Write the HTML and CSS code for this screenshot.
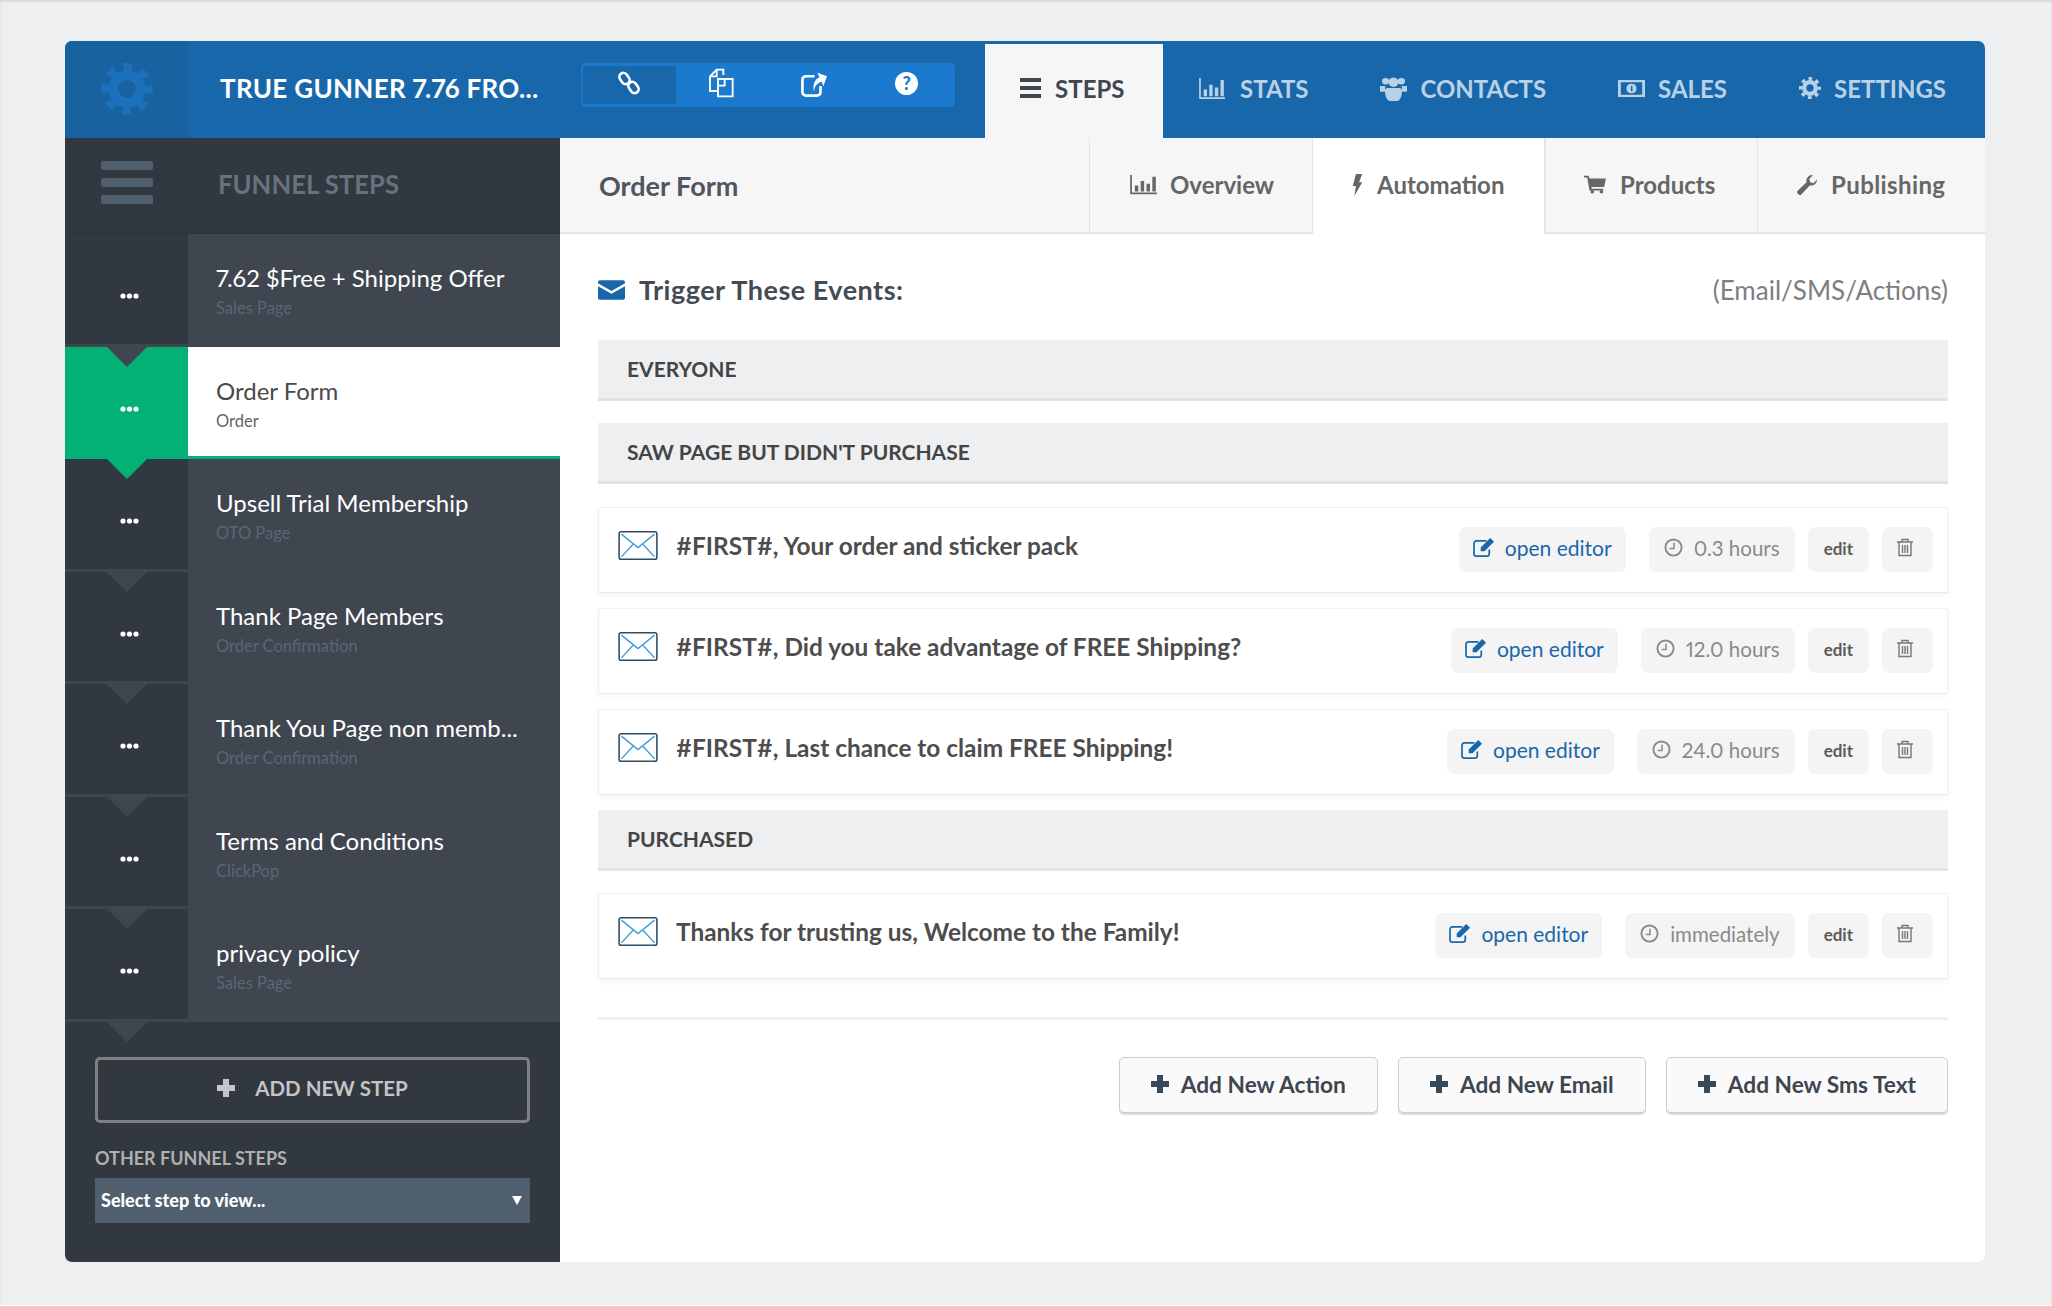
FILE: index.html
```html
<!DOCTYPE html>
<html lang="en">
<head>
  <meta charset="UTF-8" />
  <title>Funnel Steps</title>
  <link rel="stylesheet" href="styles.css">
</head>
<body>
  <svg class="sprite" xmlns="http://www.w3.org/2000/svg">
    <symbol id="i-gear" viewBox="0 0 24 24"><circle cx="12" cy="12" r="6.3" fill="none" stroke="currentColor" stroke-width="4.6"/><circle cx="12" cy="12" r="10" fill="none" stroke="currentColor" stroke-width="4" stroke-dasharray="3.93 3.93" stroke-dashoffset="1.96"/></symbol>
    <symbol id="i-link" viewBox="0 0 24 24"><g fill="none" stroke="currentColor" stroke-width="2.600"><rect x="3.500" y="1.500" width="8" height="12" rx="4" transform="rotate(-35 7.500 7.500)"/><rect x="12.500" y="10.500" width="8" height="12" rx="4" transform="rotate(-35 16.500 16.500)"/></g></symbol>
    <symbol id="i-copy" viewBox="0 0 24 24"><path d="M13 6V2H8L3 7v11h6M8 2v5H3" fill="none" stroke="currentColor" stroke-width="1.400"/><path d="M9 9h11v13H9zM14 9v5H9" fill="none" stroke="currentColor" stroke-width="1.400"/></symbol>
    <symbol id="i-ext" viewBox="0 0 24 24"><path d="M17 14v5a3 3 0 0 1-3 3H5a3 3 0 0 1-3-3V9a3 3 0 0 1 3-3h7" fill="none" stroke="currentColor" stroke-width="2.200"/><path d="M8 16c1-6 5-9 9-9V3l6 6-6 6v-4c-4 0-7 1-9 5z" fill="currentColor" transform="rotate(-25 16 9)"/></symbol>
    <symbol id="i-chart" viewBox="0 0 24 24" preserveAspectRatio="none"><path d="M1 1h1.500v20H24v2H1z" fill="currentColor"/><path d="M5 13h3v7H5zM10 8h3v12h-3zM15 11h3v9h-3zM20 3h3v17h-3z" fill="currentColor"/></symbol>
    <symbol id="i-users" viewBox="0 0 24 24" preserveAspectRatio="none"><circle cx="5" cy="5" r="3.200" fill="currentColor"/><circle cx="19" cy="5" r="3.200" fill="currentColor"/><path d="M0 9.500h5c-1 1.500-1 3.500 1 5.500H0zM24 9.500h-5c1 1.500 1 3.500-1 5.500h6z" fill="currentColor"/><circle cx="12" cy="6" r="4.500" fill="currentColor"/><path d="M6.500 11.500h11c1.500 0 2 1 2 3 0 5-2 9.500-4 9.500h-7c-2 0-4-4.500-4-9.500 0-2 .5-3 2-3z" fill="currentColor"/></symbol>
    <symbol id="i-money" viewBox="0 3 24 18" preserveAspectRatio="none"><path fill-rule="evenodd" d="M0 3h24v18H0zM2.500 5.500v13h19v-13zM12 7c3 0 4.500 2 4.500 5s-1.500 5-4.500 5-4.500-2-4.500-5 1.500-5 4.500-5z" fill="currentColor"/><path d="M11.500 9h1.300v6h-1.300z" fill="#1967ab"/></symbol>
    <symbol id="i-bolt" viewBox="0 0 14 24" preserveAspectRatio="none"><path d="M5 0h8L9 9h4L3 24l2-11H1z" fill="currentColor"/></symbol>
    <symbol id="i-cart" viewBox="0 2 24 22" preserveAspectRatio="none"><path d="M0 3h5l1 3h18l-2 10H8l.5 2H21v2H6L3.500 5H0z" fill="currentColor"/><circle cx="9" cy="21.500" r="2" fill="currentColor"/><circle cx="19" cy="21.500" r="2" fill="currentColor"/></symbol>
    <symbol id="i-wrench" viewBox="0 0 24 24"><path d="M23 6c0 4-3.500 7.500-8 6.500L5.500 22.500c-1.500 1.500-5.500-2-4-4l10-9.500C10.500 4.500 14 .5 18.500 1L14.500 5.500l1 3.500 3.500 1 4-4z" fill="currentColor"/></symbol>
    <symbol id="i-mail" viewBox="0 0 28 20"><path d="M2 0h24a2 2 0 0 1 2 2v1L14 11 0 3V2a2 2 0 0 1 2-2zM0 6l14 8 14-8v12a2 2 0 0 1-2 2H2a2 2 0 0 1-2-2z" fill="currentColor"/></symbol>
    <symbol id="i-envelope" viewBox="0 0 38 28"><rect x=".75" y=".75" width="36.500" height="26.500" rx="2" fill="#fff" stroke="#2f4a63" stroke-width="1.500"/><path d="M3 3l16 13L35 3M3 25l11-12M35 25L24 13" fill="none" stroke="#3d9ad6" stroke-width="1.300"/></symbol>
    <symbol id="i-edit" viewBox="0 0 24 22"><path d="M17 13v4.500a2.500 2.500 0 0 1-2.500 2.500h-11A2.500 2.500 0 0 1 1 17.500v-11A2.500 2.500 0 0 1 3.500 4H14" fill="none" stroke="currentColor" stroke-width="1.800"/><path d="M8 11L18 1l4 4-10 10H8z" fill="currentColor"/></symbol>
    <symbol id="i-clock" viewBox="0 0 20 20"><circle cx="10" cy="10" r="8.500" fill="none" stroke="currentColor" stroke-width="2"/><path d="M10.500 5v6H6" fill="none" stroke="currentColor" stroke-width="1.600"/></symbol>
    <symbol id="i-trash" viewBox="0 0 16 19"><path d="M0 4h16M5 4V1.500h6V4M2 4v13.500h12V4M5.500 7v8M8 7v8M10.500 7v8" fill="none" stroke="currentColor" stroke-width="1.400"/></symbol>
    <symbol id="i-plus" viewBox="0 0 18 18"><path d="M6 0h6v6h6v6h-6v6H6v-6H0V6h6z" fill="currentColor"/></symbol>
    <symbol id="i-dots" viewBox="0 0 19 6"><circle cx="3" cy="3" r="2.600" fill="currentColor"/><circle cx="9.500" cy="3" r="2.600" fill="currentColor"/><circle cx="16" cy="3" r="2.600" fill="currentColor"/></symbol>
  </svg>

  <div class="app">
    <header class="topbar">
      <div class="topbar-gear"><svg class="gear-big"><use href="#i-gear"/></svg></div>
      <div class="topbar-title">TRUE GUNNER 7.76 FRO...</div>
      <div class="quick-tools">
        <span class="tool active"><svg><use href="#i-link"/></svg></span>
        <span class="tool tool-copy"><svg><use href="#i-copy"/></svg></span>
        <span class="tool tool-ext"><svg><use href="#i-ext"/></svg></span>
        <span class="tool"><span class="help">?</span></span>
      </div>
      <nav class="mainnav">
        <a class="mainnav-item active"><span class="bars"><i></i><i></i><i></i></span>STEPS</a>
        <a class="mainnav-item"><svg><use href="#i-chart"/></svg>STATS</a>
        <a class="mainnav-item"><svg class="narrow"><use href="#i-users"/></svg>CONTACTS</a>
        <a class="mainnav-item"><svg class="money"><use href="#i-money"/></svg>SALES</a>
        <a class="mainnav-item last"><svg class="small-gear"><use href="#i-gear"/></svg>SETTINGS</a>
      </nav>
    </header>

    <div class="body">
      <aside class="sidebar">
        <div class="side-head">
          <div class="side-head-rail"><span class="burger"><i></i><i></i><i></i></span></div>
          <div class="side-head-title">FUNNEL STEPS</div>
        </div>

        <div class="step first">
          <div class="rail"><svg><use href="#i-dots"/></svg></div>
          <div class="step-text"><div class="step-name">7.62 $Free + Shipping Offer</div><div class="step-type">Sales Page</div></div>
        </div>
        <div class="step active">
          <div class="rail"><svg><use href="#i-dots"/></svg></div>
          <div class="step-text"><div class="step-name">Order Form</div><div class="step-type">Order</div></div>
        </div>
        <div class="step after-active">
          <div class="rail"><svg><use href="#i-dots"/></svg></div>
          <div class="step-text"><div class="step-name">Upsell Trial Membership</div><div class="step-type">OTO Page</div></div>
        </div>
        <div class="step">
          <div class="rail"><svg><use href="#i-dots"/></svg></div>
          <div class="step-text"><div class="step-name">Thank Page Members</div><div class="step-type">Order Confirmation</div></div>
        </div>
        <div class="step">
          <div class="rail"><svg><use href="#i-dots"/></svg></div>
          <div class="step-text"><div class="step-name">Thank You Page non memb...</div><div class="step-type">Order Confirmation</div></div>
        </div>
        <div class="step">
          <div class="rail"><svg><use href="#i-dots"/></svg></div>
          <div class="step-text"><div class="step-name">Terms and Conditions</div><div class="step-type">ClickPop</div></div>
        </div>
        <div class="step">
          <div class="rail"><svg><use href="#i-dots"/></svg></div>
          <div class="step-text"><div class="step-name">privacy policy</div><div class="step-type">Sales Page</div></div>
        </div>

        <div class="side-foot">
          <a class="add-step"><svg><use href="#i-plus"/></svg>ADD NEW STEP</a>
          <div class="other-label">OTHER FUNNEL STEPS</div>
          <div class="step-select">Select step to view...<span class="caret"></span></div>
        </div>
      </aside>

      <main class="main">
        <div class="subnav">
          <div class="subnav-title">Order Form</div>
          <a class="subtab tab-overview"><svg><use href="#i-chart"/></svg>Overview</a>
          <a class="subtab tab-automation active"><svg><use href="#i-bolt"/></svg>Automation</a>
          <a class="subtab tab-products"><svg><use href="#i-cart"/></svg>Products</a>
          <a class="subtab tab-publishing"><svg><use href="#i-wrench"/></svg>Publishing</a>
        </div>

        <div class="content">
          <div class="events-head">
            <svg class="mail"><use href="#i-mail"/></svg>
            <span class="events-title">Trigger These Events:</span>
            <span class="events-note">(Email/SMS/Actions)</span>
          </div>

          <div class="group first-group">EVERYONE</div>
          <div class="group">SAW PAGE BUT DIDN'T PURCHASE</div>

          <div class="email-row">
            <svg class="envelope"><use href="#i-envelope"/></svg>
            <div class="email-title">#FIRST#, Your order and sticker pack</div>
            <a class="pill pill-open"><svg><use href="#i-edit"/></svg>open editor</a>
            <a class="pill pill-time"><svg><use href="#i-clock"/></svg>0.3 hours</a>
            <a class="pill pill-edit">edit</a>
            <a class="pill pill-trash"><svg><use href="#i-trash"/></svg></a>
          </div>
          <div class="email-row">
            <svg class="envelope"><use href="#i-envelope"/></svg>
            <div class="email-title">#FIRST#, Did you take advantage of FREE Shipping?</div>
            <a class="pill pill-open"><svg><use href="#i-edit"/></svg>open editor</a>
            <a class="pill pill-time"><svg><use href="#i-clock"/></svg>12.0 hours</a>
            <a class="pill pill-edit">edit</a>
            <a class="pill pill-trash"><svg><use href="#i-trash"/></svg></a>
          </div>
          <div class="email-row">
            <svg class="envelope"><use href="#i-envelope"/></svg>
            <div class="email-title">#FIRST#, Last chance to claim FREE Shipping!</div>
            <a class="pill pill-open"><svg><use href="#i-edit"/></svg>open editor</a>
            <a class="pill pill-time"><svg><use href="#i-clock"/></svg>24.0 hours</a>
            <a class="pill pill-edit">edit</a>
            <a class="pill pill-trash"><svg><use href="#i-trash"/></svg></a>
          </div>

          <div class="group">PURCHASED</div>

          <div class="email-row">
            <svg class="envelope"><use href="#i-envelope"/></svg>
            <div class="email-title">Thanks for trusting us, Welcome to the Family!</div>
            <a class="pill pill-open"><svg><use href="#i-edit"/></svg>open editor</a>
            <a class="pill pill-time"><svg><use href="#i-clock"/></svg>immediately</a>
            <a class="pill pill-edit">edit</a>
            <a class="pill pill-trash"><svg><use href="#i-trash"/></svg></a>
          </div>

          <div class="actions">
            <a class="btn"><svg><use href="#i-plus"/></svg>Add New Action</a>
            <a class="btn"><svg><use href="#i-plus"/></svg>Add New Email</a>
            <a class="btn"><svg><use href="#i-plus"/></svg>Add New Sms Text</a>
          </div>
        </div>
      </main>
    </div>
  </div>
</body>
</html>
```

FILE: styles.css
```css
:root {
  --blue: #1967ab;
  --blue-dark: #17629f;
  --blue-light: #1c7ace;
  --rail: #32383f;
  --panel: #3f4650;
  --green: #03b177;
  --slate: #4f5f6e;
  --text: #4a4a4a;
  --line: #e5e5e5;
  --font: Lato, "Liberation Sans", sans-serif;
}
* { box-sizing: border-box; }
body {
  margin: 0;
  height: 1306px;
  padding: 41px 67px 0 65px;
  background: #eeeff1;
  box-shadow: inset 0 2px 2px #d9dadd;
  border-bottom: 1px solid #fff;
  font-family: var(--font);
  font-variant-numeric: proportional-nums;
  color: var(--text);
  overflow: hidden;
}
.sprite { display: none; }
.app {
  height: 1221px;
  display: flex;
  flex-direction: column;
  background: #fff;
  border-radius: 7px;
  overflow: hidden;
}

/* top bar */
.topbar {
  height: 97px;
  flex: none;
  display: flex;
  background: var(--blue);
}
.topbar-gear {
  width: 123px;
  flex: none;
  background: var(--blue-dark);
  display: flex;
  justify-content: center;
  padding-top: 22px;
}
.gear-big { width: 52px; height: 52px; color: #1c70bc; }
.topbar-title {
  width: 270px;
  flex: none;
  padding: 31px 0 0 32px;
  color: #fff;
  font-size: 26px;
  font-weight: 700;
  letter-spacing: .3px;
  white-space: nowrap;
}
.quick-tools {
  width: 374px;
  height: 44px;
  margin: 22px 0 0 123px;
  padding: 3px 2px;
  display: flex;
  background: var(--blue-light);
  border-radius: 5px;
  flex: none;
}
.tool {
  flex: 1;
  display: flex;
  align-items: center;
  justify-content: center;
  color: #fff;
  padding-bottom: 4px;
}
.tool.active { background: var(--blue); }
.tool svg { width: 24px; height: 24px; }
.tool-copy svg { width: 32px; height: 32px; }
.tool-ext svg { width: 29px; height: 29px; }
.help {
  width: 23px;
  height: 23px;
  border-radius: 50%;
  background: #fff;
  color: var(--blue-light);
  font-size: 18px;
  font-weight: 900;
  line-height: 23px;
  text-align: center;
}
.mainnav { flex: 1; display: flex; justify-content: flex-end; }
.mainnav-item {
  display: flex;
  align-items: center;
  gap: 15px;
  padding: 0 37px 3px 35px;
  color: #b9d1e6;
  font-size: 24px;
  font-weight: 700;
  white-space: nowrap;
}
.mainnav-item svg { width: 27px; height: 23px; }
.mainnav-item .narrow { width: 27px; height: 25px; margin-right: -2px; }
.mainnav-item .money { width: 27px; height: 17px; margin-right: -2px; }
.mainnav-item .small-gear { width: 22px; height: 22px; margin-right: -2px; }
.mainnav-item.last { padding-right: 39px; }
.mainnav-item.active {
  width: 178px;
  flex: none;
  gap: 14px;
  margin-top: 3px;
  padding: 0 0 6px 35px;
  background: #f6f6f6;
  color: var(--panel);
}
.bars { display: flex; flex-direction: column; gap: 4px; width: 21px; }
.bars i { height: 4px; background: var(--panel); }

/* sidebar */
.body { flex: 1; display: flex; min-height: 0; }
.sidebar {
  width: 495px;
  flex: none;
  display: flex;
  flex-direction: column;
  background: var(--rail);
}
.side-head {
  height: 96px;
  flex: none;
  display: flex;
  border-bottom: 1px solid #2c3238;
}
.side-head-rail {
  width: 123px;
  padding-top: 23px;
  display: flex;
  justify-content: center;
}
.burger { display: flex; flex-direction: column; gap: 8px; width: 52px; }
.burger i { height: 9px; background: var(--slate); border-radius: 2px; }
.side-head-title {
  padding: 31px 0 0 30px;
  color: #66727e;
  font-size: 25.700px;
  font-weight: 700;
}
.step {
  height: 112.57px;
  flex: none;
  position: relative;
  display: flex;
  background: var(--panel);
}
.step::before {
  content: "";
  position: absolute;
  left: 41.500px;
  top: 0;
  border-left: 20px solid transparent;
  border-right: 20px solid transparent;
  border-top: 20px solid var(--panel);
}
.step.first::before { display: none; }
.step.after-active::before { border-top-color: var(--green); }
.rail {
  width: 123px;
  flex: none;
  height: calc(100% - 3px);
  padding: 59px 0 0 5px;
  display: flex;
  justify-content: center;
  background: var(--rail);
  color: #fff;
}
.rail svg { width: 19px; height: 6px; }
.step-text { padding: 29px 0 0 28px; }
.step-name { color: #fff; font-size: 24px; line-height: 30px; white-space: nowrap; }
.step-type { margin-top: 5px; color: #5c6570; font-size: 16.500px; line-height: 20px; }
.step.active { background: #fff; border-bottom: 3px solid var(--green); }
.step.active .rail { height: calc(100% + 3px); background: var(--green); }
.step.active .step-name { color: var(--text); }
.step.active .step-type { color: #666; }
.step.active::before { z-index: 1; }
.side-foot {
  flex: 1;
  position: relative;
  padding: 35px 30px 0;
}
.side-foot::before {
  content: "";
  position: absolute;
  left: 41.500px;
  top: 0;
  border-left: 20px solid transparent;
  border-right: 20px solid transparent;
  border-top: 20px solid var(--panel);
}
.add-step {
  height: 66px;
  display: flex;
  align-items: center;
  justify-content: center;
  gap: 20px;
  padding: 0 0 3px;
  border: 3px solid #808080;
  border-radius: 5px;
  color: #c5c5c5;
  font-size: 20.500px;
  font-weight: 700;
}
.add-step svg { width: 18px; height: 18px; }
.other-label {
  margin-top: 24px;
  color: #b0b0b0;
  font-size: 18px;
  font-weight: 700;
  line-height: 22px;
}
.step-select {
  height: 45px;
  margin-top: 9px;
  padding: 0 6px;
  display: flex;
  align-items: center;
  justify-content: space-between;
  background: var(--slate);
  color: #fff;
  font-size: 18px;
  font-weight: 900;
}
.caret {
  margin-right: 2px;
  border-left: 5px solid transparent;
  border-right: 5px solid transparent;
  border-top: 9px solid #fff;
}

/* main */
.main { flex: 1; display: flex; flex-direction: column; min-width: 0; }
.subnav {
  height: 96px;
  flex: none;
  display: flex;
  background: #f6f6f6;
  border-bottom: 2px solid var(--line);
}
.subnav-title {
  flex: 1;
  padding: 31px 0 0 39px;
  color: #4f5660;
  font-size: 27px;
  font-weight: 700;
}
.subtab {
  display: flex;
  align-items: center;
  gap: 13px;
  padding: 0 0 1px 39px;
  border-left: 1px solid var(--line);
  color: #666;
  font-size: 24px;
  font-weight: 700;
}
.tab-overview { width: 223px; }
.tab-overview svg { width: 28px; height: 21px; }
.tab-automation { width: 233px; gap: 14px; }
.tab-automation svg { width: 11px; height: 22px; }
.tab-products { width: 212px; padding-left: 38px; gap: 14px; }
.tab-products svg { width: 22px; height: 19px; }
.tab-publishing { width: 228px; padding-left: 38px; letter-spacing: .4px; }
.tab-publishing svg { width: 22px; height: 22px; }
.subtab.active {
  background: #fff;
  margin-bottom: -2px;
  padding-bottom: 3px;
  border-right: 1px solid var(--line);
}
.content { flex: 1; padding: 0 37px 0 38px; }
.events-head {
  height: 106px;
  display: flex;
  align-items: center;
  padding-top: 5px;
}
.mail { width: 27px; height: 20px; color: var(--blue); margin-right: 14px; }
.events-title { color: #444b54; font-size: 27px; font-weight: 700; letter-spacing: .5px; }
.events-note { margin-left: auto; color: #7b7f85; font-size: 26px; }
.group {
  height: 61px;
  margin: 0 0 23px;
  padding: 0 0 2px 29px;
  display: flex;
  align-items: center;
  background: #eeeff1;
  border-bottom: 3px solid #e0e2e5;
  color: #444;
  font-size: 21px;
  font-weight: 700;
}
.first-group { margin-bottom: 22px; }
.email-row + .group { margin-bottom: 22px; }
.email-row {
  height: 86px;
  margin-bottom: 15px;
  display: flex;
  align-items: center;
  padding: 0 14px 0 19px;
  background: #fff;
  border: 1px solid #f0f0f0;
  border-bottom-color: #e8e8e8;
  box-shadow: 0 3px 6px rgba(0,0,0,.04);
}
.envelope { width: 40px; height: 29px; flex: none; margin: -10px 18px 0 0; }
.email-title {
  margin: -9px auto 0 0;
  color: #4d4d4d;
  font-size: 24.400px;
  font-weight: 700;
  white-space: nowrap;
}
.pill {
  height: 45px;
  display: flex;
  align-items: center;
  gap: 11px;
  margin-top: -1px;
  padding: 0 15px 5px;
  background: #f4f4f4;
  border-radius: 7px;
  font-size: 21px;
}
.pill-open { color: var(--blue); margin-right: 23px; gap: 9px; padding: 0 14px 4px; }
.pill-open svg { width: 23px; height: 21px; }
.pill-time { color: #8a8a8a; margin-right: 13px; font-size: 20.500px; padding-bottom: 4px; }
.pill-time svg { width: 19px; height: 19px; }
.pill-edit {
  color: #5a5a5a;
  margin-right: 13px;
  padding: 0 16px 2px;
  font-size: 17px;
  font-weight: 700;
}
.pill-trash { width: 51px; color: #777; padding: 0 0 4px 15px; }
.pill-trash svg { width: 16px; height: 19px; }
.actions {
  display: flex;
  justify-content: flex-end;
  gap: 20px;
  margin-top: 38px;
  padding-top: 37px;
  border-top: 3px solid #f0f0f0;
}
.btn {
  height: 56px;
  display: flex;
  align-items: center;
  gap: 12px;
  padding: 0 31px 2px;
  background: #fafafa;
  border: 1px solid #ccc;
  border-radius: 5px;
  box-shadow: 0 2px 0 #ddd;
  color: #3f4650;
  font-size: 22.700px;
  font-weight: 700;
}
.btn svg { width: 18px; height: 18px; color: #364a5c; }
```
